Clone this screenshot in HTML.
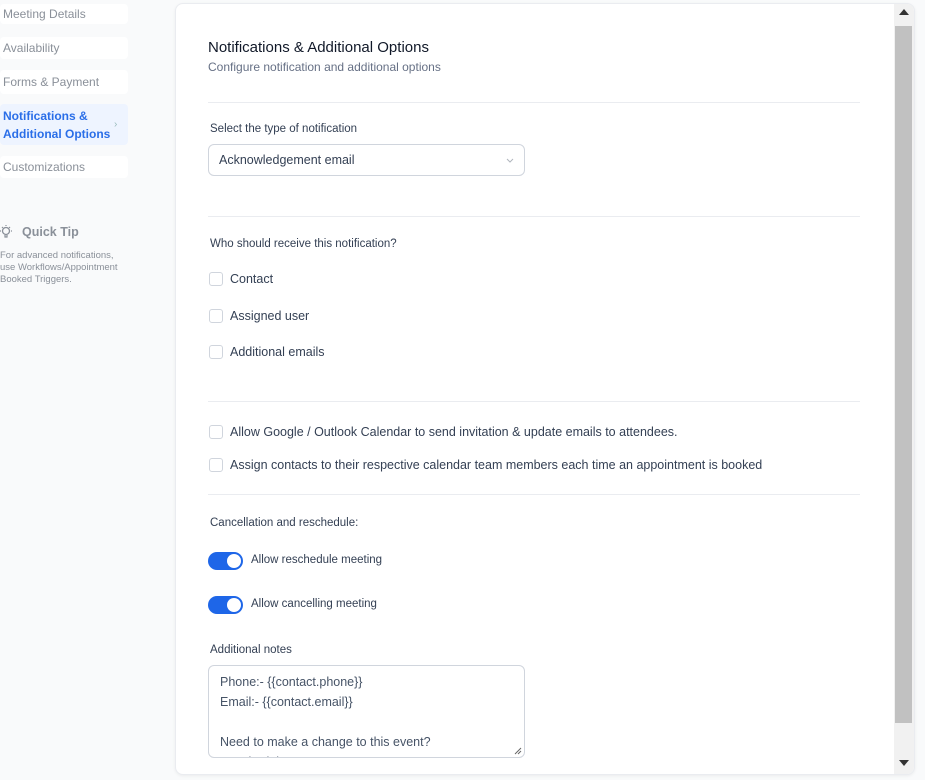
<!DOCTYPE html>
<html><head><style>
*{box-sizing:border-box;margin:0;padding:0}
body{width:925px;height:780px;overflow:hidden;background:#f9fafb;font-family:"Liberation Sans",sans-serif;position:relative;color:#344054}
.nav{position:absolute;left:0;width:128px;background:#fff;border-radius:4px;font-size:12px;color:#8a9099;padding-left:3px}
.nav.a{background:#eef4ff;color:#2a6ee8;font-weight:bold;line-height:18px;padding-top:3px}
.card{position:absolute;left:175px;top:3px;width:740px;height:772px;background:#fff;border:1px solid #eaecf0;border-radius:8px;overflow:hidden;box-shadow:0 1px 3px rgba(0,0,0,.06)}
.sb{position:absolute;left:718px;top:0;width:20px;height:772px;background:#f1f1f1}
.thumb{position:absolute;left:1px;top:22px;width:17px;height:697px;background:#c1c1c1}
.hr{position:absolute;left:32px;width:652px;height:1px;background:#eaecf0}
.t{position:absolute;white-space:nowrap}
.cb{position:absolute;left:33px;width:14px;height:14px;border:1px solid #d0d5dd;border-radius:3px}
.lab{position:absolute;left:54px;font-size:12.5px;color:#344054;white-space:nowrap}
.tg{position:absolute;left:32px;width:35px;height:18px;background:#1e66e8;border-radius:9px}
.tg:after{content:"";position:absolute;right:2px;top:2px;width:14px;height:14px;border-radius:50%;background:#fff}
</style></head><body>
<div class="nav" style="top:4px;height:20px;line-height:20px">Meeting Details</div>
<div class="nav" style="top:37px;height:22px;line-height:22px">Availability</div>
<div class="nav" style="top:70px;height:24px;line-height:24px">Forms &amp; Payment</div>
<div class="nav a" style="top:104px;height:41px">Notifications &amp;<br>Additional Options<span style="position:absolute;left:114px;top:12px;font-weight:normal;color:#9bb;font-size:10px">›</span></div>
<div class="nav" style="top:156px;height:22px;line-height:22px">Customizations</div>
<svg style="position:absolute;left:0;top:224px" width="14" height="16" viewBox="0 0 14 16"><circle cx="6" cy="7" r="3.5" fill="none" stroke="#8a9099" stroke-width="1.3"/><path d="M5 11v2h2v-2M6 1v1M1 7H0M12 7h-1M2 3l1 1M10 3l-1 1" stroke="#8a9099" stroke-width="1.2" fill="none"/></svg>
<div class="t" style="left:22px;top:225px;font-size:12.5px;font-weight:bold;color:#8a9099">Quick Tip</div>
<div class="t" style="left:0;top:250px;font-size:9.5px;line-height:12px;color:#8a9099">For advanced notifications,<br>use Workflows/Appointment<br>Booked Triggers.</div>
<div class="card">
<div class="t" style="left:32px;top:35px;font-size:15px;color:#101828">Notifications &amp; Additional Options</div>
<div class="t" style="left:32px;top:56px;font-size:12px;color:#667085">Configure notification and additional options</div>
<div class="hr" style="top:98px"></div>
<div class="t" style="left:34px;top:119px;font-size:11.5px;color:#344054">Select the type of notification</div>
<div style="position:absolute;left:32px;top:140px;width:317px;height:32px;border:1px solid #d0d5dd;border-radius:6px"><span class="t" style="left:10px;top:8px;font-size:12.5px">Acknowledgement email</span><svg style="position:absolute;left:297px;top:13px" width="8" height="5" viewBox="0 0 8 5"><path d="M1 1l3 3 3-3" stroke="#b0b5bd" fill="none"/></svg></div>
<div class="hr" style="top:212px"></div>
<div class="t" style="left:34px;top:234px;font-size:11.5px">Who should receive this notification?</div>
<div class="cb" style="top:268px"></div><div class="lab" style="top:268px">Contact</div>
<div class="cb" style="top:305px"></div><div class="lab" style="top:305px">Assigned user</div>
<div class="cb" style="top:341px"></div><div class="lab" style="top:341px">Additional emails</div>
<div class="hr" style="top:397px"></div>
<div class="cb" style="top:421px"></div><div class="lab" style="top:421px">Allow Google / Outlook Calendar to send invitation &amp; update emails to attendees.</div>
<div class="cb" style="top:454px"></div><div class="lab" style="top:454px">Assign contacts to their respective calendar team members each time an appointment is booked</div>
<div class="hr" style="top:490px"></div>
<div class="t" style="left:34px;top:513px;font-size:11.5px">Cancellation and reschedule:</div>
<div class="tg" style="top:548px"></div><div class="lab" style="left:75px;top:550px;font-size:11.5px">Allow reschedule meeting</div>
<div class="tg" style="top:592px"></div><div class="lab" style="left:75px;top:594px;font-size:11.5px">Allow cancelling meeting</div>
<div class="t" style="left:34px;top:640px;font-size:11.5px">Additional notes</div>
<div style="position:absolute;left:32px;top:661px;width:317px;height:93px;border:1px solid #d0d5dd;border-radius:6px;overflow:hidden;font-size:12.5px;line-height:20px;padding:6px 0 0 11px;color:#475467">Phone:- {{contact.phone}}<br>Email:- {{contact.email}}<br><br>Need to make a change to this event?<br>Reschedule<svg style="position:absolute;left:305px;top:81px" width="8" height="8" viewBox="0 0 8 8"><path d="M7 1L1 7M7 4L4 7" stroke="#666" fill="none"/></svg></div>
<div class="sb"><div class="thumb"></div><div class="t" style="left:5px;top:5px;border-left:5px solid transparent;border-right:5px solid transparent;border-bottom:6px solid #333"></div><div class="t" style="left:5px;top:756px;border-left:5px solid transparent;border-right:5px solid transparent;border-top:6px solid #333"></div></div>
</div>
</body></html>
